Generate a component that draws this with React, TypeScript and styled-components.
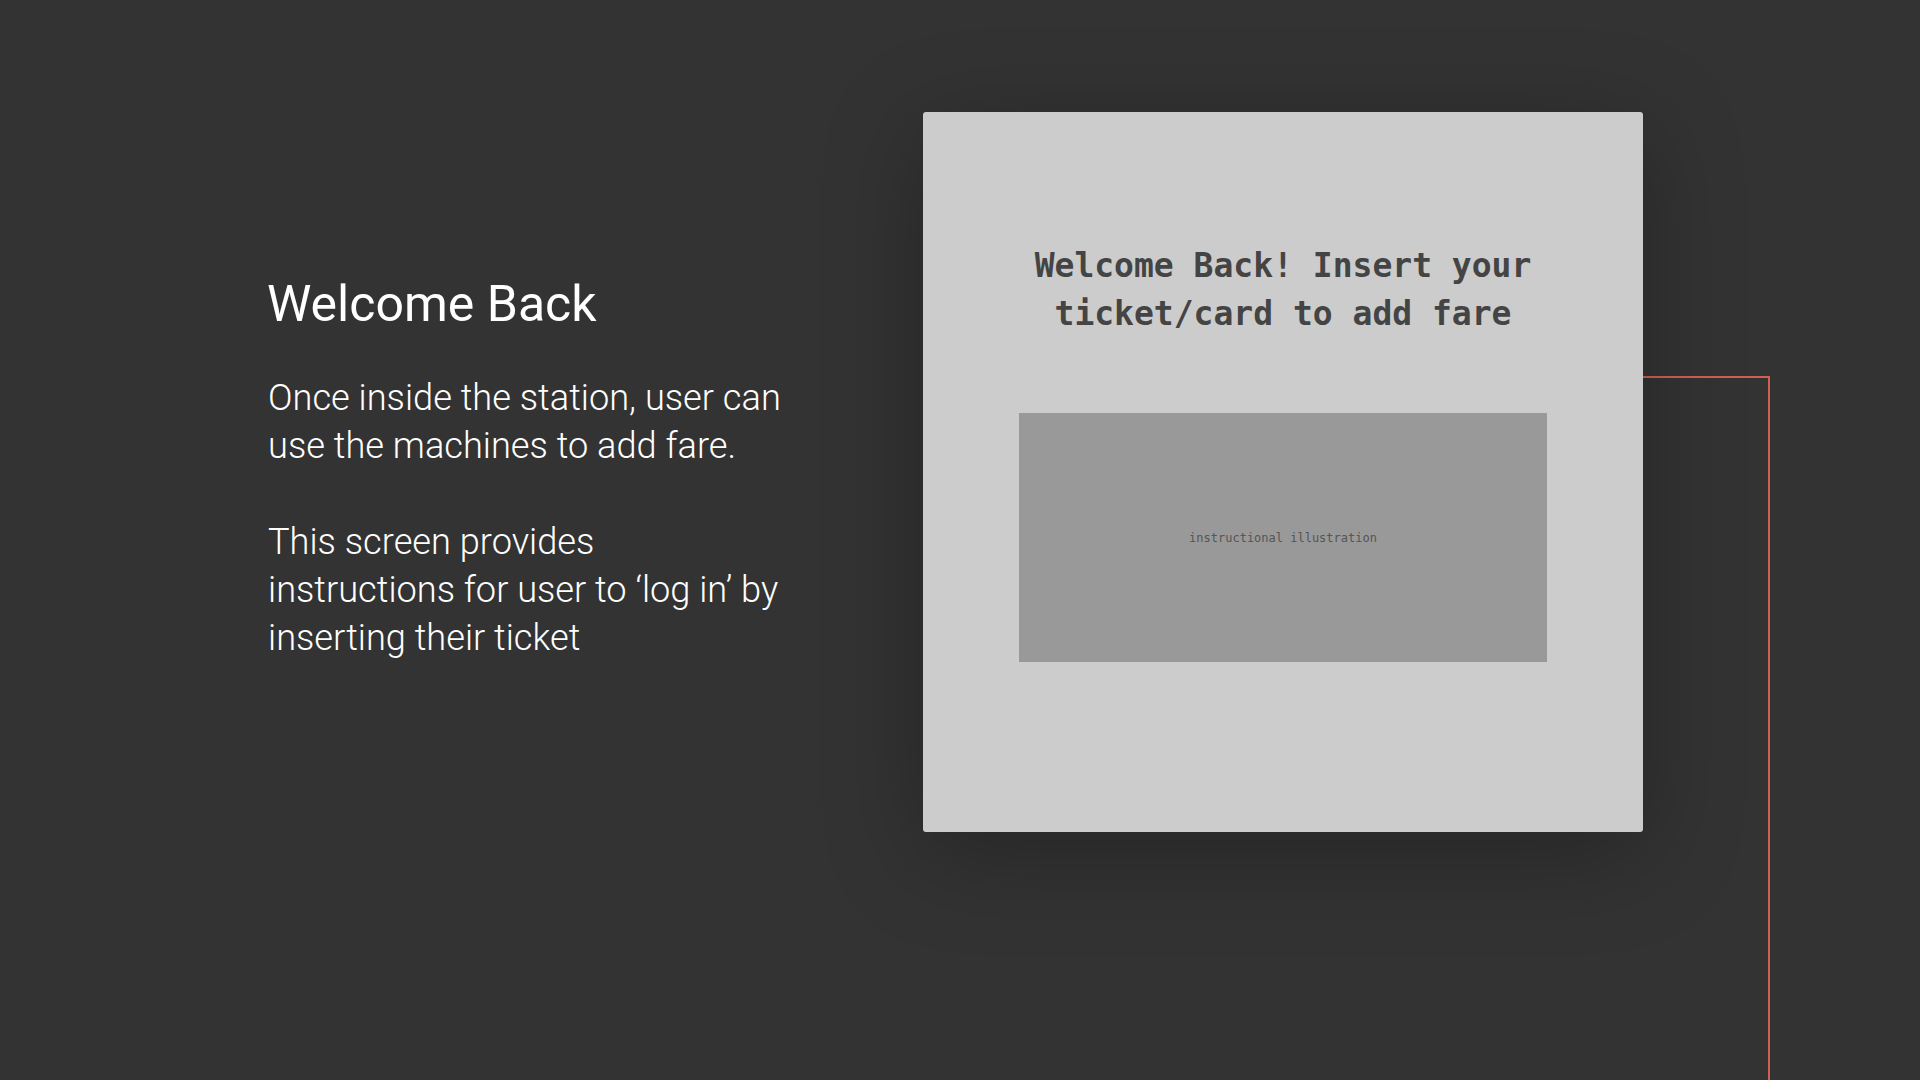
import React from "react";
import styled, { createGlobalStyle } from "styled-components";

const GlobalStyle = createGlobalStyle`
  html, body {
    margin: 0;
    padding: 0;
    background: #333333;
  }
  * { box-sizing: border-box; }
`;

const Page = styled.main`
  position: relative;
  width: 1920px;
  height: 1080px;
  overflow: hidden;
  background: #333333;
  display: flex;
  align-items: flex-start;
  padding: 112px 0 0 267px;
`;

const Notes = styled.section`
  width: 520px;
  padding-top: 162px;
  color: #ffffff;
  font-family: Roboto, "Liberation Sans", sans-serif;
`;

const Heading = styled.h1`
  margin: 0;
  font-size: 50px;
  line-height: 60px;
  font-weight: 400;
  color: #ffffff;
`;

const Paragraph = styled.p<{ $gap: number }>`
  margin: ${(p) => p.$gap}px 0 0 1px;
  font-size: 36.2px;
  line-height: 48px;
  font-weight: 300;
  color: #ffffff;
`;

const Card = styled.section`
  position: relative;
  z-index: 1;
  margin-left: 136px;
  width: 720px;
  height: 720px;
  background: #cccccc;
  border-radius: 3px;
  box-shadow: 0 20px 100px rgba(0, 0, 0, 0.28);
  display: flex;
  flex-direction: column;
  align-items: center;
  padding: 130px 90px 0;
`;

const CardTitle = styled.h2`
  margin: 0;
  font-family: "DejaVu Sans Mono", "Liberation Mono", monospace;
  font-weight: 700;
  font-size: 33px;
  line-height: 48px;
  color: #444444;
  text-align: center;
`;

const Illustration = styled.div`
  margin-top: 75px;
  width: 528px;
  height: 249px;
  background: #999999;
  display: flex;
  align-items: center;
  justify-content: center;
`;

const IllustrationLabel = styled.span`
  font-family: "DejaVu Sans Mono", "Liberation Mono", monospace;
  font-size: 12px;
  color: #555555;
`;

const Connector = styled.div`
  position: absolute;
  left: 1643px;
  top: 376px;
  width: 127px;
  bottom: 0;
  border-top: 2px solid #cf6153;
  border-right: 2px solid #cf6153;
  z-index: 0;
`;

export default function App() {
  return (
    <>
      <GlobalStyle />
      <Page>
        <Notes>
          <Heading>Welcome Back</Heading>
          <Paragraph $gap={40}>
            Once inside the station, user can use the machines to add fare.
          </Paragraph>
          <Paragraph $gap={48}>
            This screen provides instructions for user to ‘log in’ by inserting
            their ticket
          </Paragraph>
        </Notes>
        <Card>
          <CardTitle>
            Welcome Back! Insert your ticket/card to add fare
          </CardTitle>
          <Illustration>
            <IllustrationLabel>instructional illustration</IllustrationLabel>
          </Illustration>
        </Card>
        <Connector />
      </Page>
    </>
  );
}
